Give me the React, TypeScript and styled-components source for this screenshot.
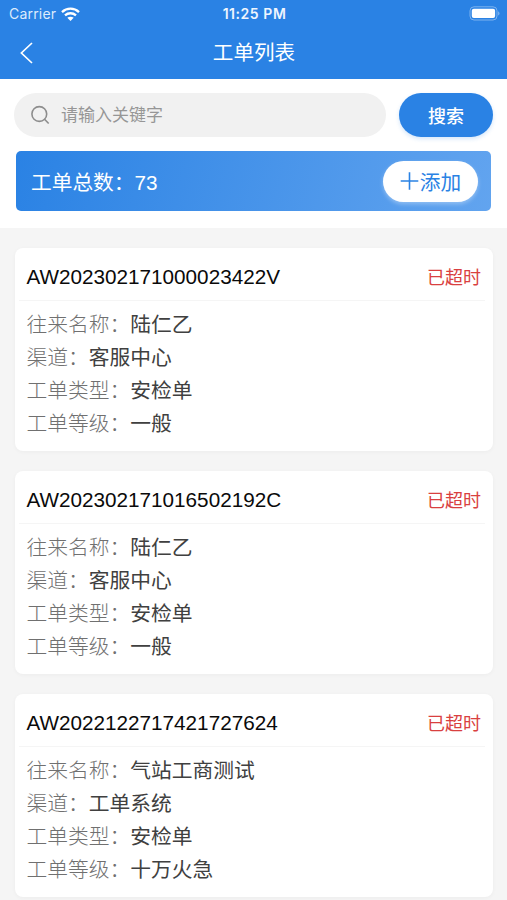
import React from "react";
import styled, { createGlobalStyle } from "styled-components";

const Global = createGlobalStyle`
  * { box-sizing: border-box; }
  body {
    margin: 0;
    background: #f5f5f5;
    font-family: "Liberation Sans", "Noto Sans CJK SC", sans-serif;
  }
  button, input { font-family: inherit; }
`;

const Page = styled.main`
  width: 507px;
  height: 900px;
  overflow: hidden;
  background: #f5f5f5;
`;

const Header = styled.header`
  height: 79px;
  background: #2a82e4;
  color: #fff;
`;

const StatusBar = styled.div`
  height: 27px;
  display: grid;
  grid-template-columns: 1fr auto 1fr;
  align-items: center;
  padding: 0 7px 0 9px;
  font-family: Inter, "Liberation Sans", sans-serif;
`;

const Carrier = styled.div`
  display: flex;
  align-items: center;
  gap: 5px;
  font-size: 14px;
  letter-spacing: 0.2px;
  color: #dcebfc;
`;

const Clock = styled.div`
  font-size: 14px;
  font-weight: 600;
  letter-spacing: 0.55px;
  color: #eef5fe;
`;

const Battery = styled.svg`
  justify-self: end;
  display: block;
`;

const NavBar = styled.nav`
  height: 52px;
  display: grid;
  grid-template-columns: 60px 1fr 60px;
  align-items: center;
`;

const BackButton = styled.button`
  display: flex;
  padding: 0 0 0 19px;
  border: 0;
  background: none;
  color: #fff;
`;

const Title = styled.h1`
  margin: 0;
  padding-left: 1px;
  text-align: center;
  font-size: 20.6px;
  line-height: 30px;
  font-weight: 400;
`;

const Tools = styled.section`
  height: 149px;
  padding: 14px 14px 0;
  background: #fff;
`;

const SearchRow = styled.form`
  display: flex;
  gap: 13.5px;
`;

const SearchField = styled.label`
  flex: 1;
  height: 44px;
  display: flex;
  align-items: center;
  gap: 11px;
  padding: 0 16px;
  border-radius: 22px;
  background: #f1f1f1;
  color: #8d8d8d;
`;

const SearchInput = styled.input`
  flex: 1;
  min-width: 0;
  padding: 2px 0 0;
  border: 0;
  outline: 0;
  background: none;
  font-size: 17px;
  color: #333;
  &::placeholder { color: #969696; opacity: 1; }
`;

const SearchButton = styled.button`
  width: 94px;
  height: 44px;
  padding: 0;
  border: 0;
  border-radius: 22px;
  background: #2a82e4;
  box-shadow: 0 2px 4px rgba(42, 130, 228, 0.2);
  color: #fff;
  font-size: 18px;
  font-weight: 500;
`;

const Summary = styled.div`
  height: 60px;
  margin: 14px 2px 0;
  padding: 0 13px 0 15px;
  display: flex;
  align-items: center;
  justify-content: space-between;
  border-radius: 5px;
  background: linear-gradient(105deg, #2a82e4, #62a4ef);
  color: #fff;
  font-size: 20.7px;
`;

const AddButton = styled.button`
  width: 95px;
  height: 41px;
  padding: 0;
  display: flex;
  align-items: center;
  justify-content: center;
  gap: 1px;
  border: 0;
  border-radius: 21px;
  background: #fff;
  box-shadow: 0 2px 4px rgba(255, 255, 255, 0.35);
  color: #2a82e4;
  font-size: 20.7px;
`;

const List = styled.section`
  display: grid;
  gap: 20px;
  padding: 20px 14px 0 15px;
`;

const Card = styled.article`
  height: 203px;
  border-radius: 8px;
  background: #fff;
  box-shadow: 0 1px 4px rgba(0, 0, 0, 0.04);
`;

const CardHead = styled.div`
  height: 53px;
  margin: 0 8px 0 4px;
  padding: 5px 4px 0 7.5px;
  display: flex;
  align-items: center;
  justify-content: space-between;
  border-bottom: 1px solid #f5f5f5;
`;

const OrderNumber = styled.span`
  font-size: 20.7px;
  color: #0a0a0a;
`;

const Status = styled.span`
  padding-bottom: 2px;
  font-size: 18px;
  color: #d94040;
`;

const Details = styled.dl`
  margin: 0;
  padding: 7px 11.5px 0;
`;

const Detail = styled.div`
  height: 33px;
  display: flex;
  font-size: 20.75px;
  line-height: 33px;
`;

const Label = styled.dt`
  color: #707070;
  font-weight: 300;
`;

const Value = styled.dd`
  margin: 0;
  color: #404040;
`;

const orders = [
  { id: "AW202302171000023422V", name: "陆仁乙", channel: "客服中心", type: "安检单", level: "一般" },
  { id: "AW202302171016502192C", name: "陆仁乙", channel: "客服中心", type: "安检单", level: "一般" },
  { id: "AW2022122717421727624", name: "气站工商测试", channel: "工单系统", type: "安检单", level: "十万火急" },
];

const WifiIcon = () => (
  <svg width="19" height="14" viewBox="0 0 19 14" fill="none" stroke="#fff" strokeWidth="2.3">
    <path d="M1 5.1C5.8.5 13.2.5 18 5.1M4 8.4c3.2-2.9 7.8-2.9 11 0" />
    <path d="M6.3 10.8c1.8-1.5 4.6-1.5 6.4 0L9.5 14z" fill="#fff" stroke="none" />
  </svg>
);

const BatteryIcon = () => (
  <Battery width="31" height="15" viewBox="0 0 31 15" fill="none">
    <rect x="1" y=".8" width="27" height="13.2" rx="4" stroke="#7db2ee" />
    <rect x="2.8" y="2.7" width="23.3" height="9.4" rx="2" fill="#fff" />
    <path d="M29.3 5.2c1.5.7 1.5 3.7 0 4.4z" fill="#94c0f2" />
  </Battery>
);

export default function App() {
  return (
    <Page>
      <Global />
      <Header>
        <StatusBar>
          <Carrier>Carrier <WifiIcon /></Carrier>
          <Clock>11:25 PM</Clock>
          <BatteryIcon />
        </StatusBar>
        <NavBar>
          <BackButton aria-label="返回">
            <svg width="15" height="22" viewBox="0 0 15 22" fill="none" stroke="currentColor" strokeWidth="1.7">
              <path d="M13 1 2.4 11 13 21" />
            </svg>
          </BackButton>
          <Title>工单列表</Title>
        </NavBar>
      </Header>
      <Tools>
        <SearchRow>
          <SearchField>
            <svg width="20" height="20" viewBox="0 0 20 20" fill="none" stroke="currentColor" strokeWidth="1.6">
              <circle cx="9.3" cy="9" r="7.4" />
              <path d="m14.5 14.3 4.2 4.2" />
            </svg>
            <SearchInput placeholder="请输入关键字" />
          </SearchField>
          <SearchButton type="button">搜索</SearchButton>
        </SearchRow>
        <Summary>
          <span>工单总数：73</span>
          <AddButton>
            <svg width="19" height="20" viewBox="0 0 19 20" stroke="currentColor" strokeWidth="1.6">
              <path d="M.7 10h17.6M9.5 1.2v17.6" />
            </svg>
            添加
          </AddButton>
        </Summary>
      </Tools>
      <List>
        {orders.map((order) => (
          <Card key={order.id}>
            <CardHead>
              <OrderNumber>{order.id}</OrderNumber>
              <Status>已超时</Status>
            </CardHead>
            <Details>
              <Detail><Label>往来名称：</Label><Value>{order.name}</Value></Detail>
              <Detail><Label>渠道：</Label><Value>{order.channel}</Value></Detail>
              <Detail><Label>工单类型：</Label><Value>{order.type}</Value></Detail>
              <Detail><Label>工单等级：</Label><Value>{order.level}</Value></Detail>
            </Details>
          </Card>
        ))}
      </List>
    </Page>
  );
}
